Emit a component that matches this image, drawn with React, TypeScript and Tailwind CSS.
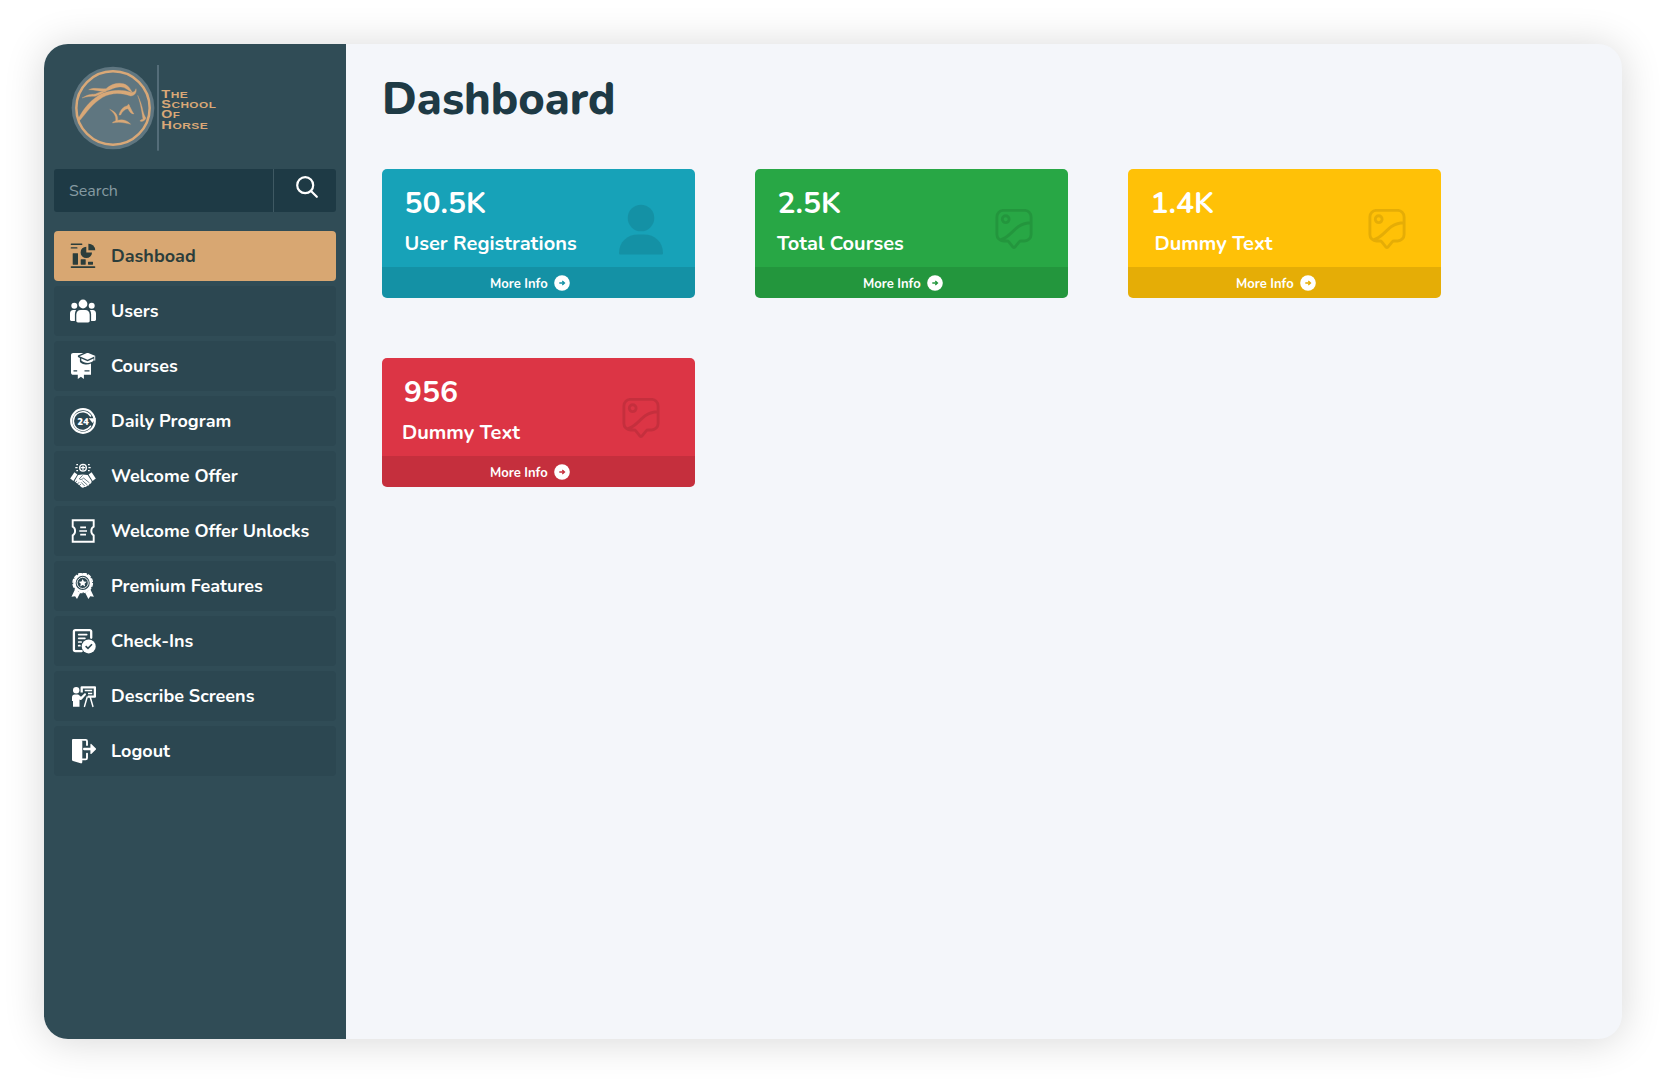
import React, { type ReactNode } from 'react';

const Svg = ({ children }: { children: ReactNode }) => (
  <svg viewBox="0 0 26 26" className="h-[26px] w-[26px] shrink-0" fill="currentColor">
    {children}
  </svg>
);

const DashboardIcon = () => (
  <Svg>
    <rect x="0.7" y="0.6" width="11.7" height="1.3" rx="0.6" />
    <rect x="0.7" y="4.2" width="6.8" height="1.3" rx="0.6" />
    <rect x="2.7" y="10.2" width="5.3" height="11.5" rx="0.4" />
    <rect x="10.7" y="16.3" width="5" height="5.4" rx="0.4" />
    <rect x="18" y="18.7" width="5" height="3" rx="0.4" />
    <rect x="0.7" y="23.2" width="24.6" height="1.8" rx="0.8" />
    <path d="M16.3 3.7a5.7 5.7 0 1 0 5.7 5.7h-5.7z" />
    <path d="M18.4 0.7a6.6 6.6 0 0 1 6.8 6.6h-6.8z" />
  </Svg>
);

const UsersIcon = () => (
  <Svg>
    <circle cx="13" cy="6" r="4.4" />
    <circle cx="4.3" cy="7.7" r="3" />
    <circle cx="21.7" cy="7.7" r="3" />
    <path d="M6.3 16.8c0-3 1.9-4.9 4.4-4.9h4.6c2.5 0 4.4 1.9 4.4 4.9v6c0 1-.6 1.6-1.6 1.6H7.9c-1 0-1.6-.6-1.6-1.6z" />
    <path d="M0 15.5c0-2.1 1.3-3.5 3.2-3.5h2.9c-.8 1.2-1.2 2.6-1.2 4.3V23H1.4C.5 23 0 22.5 0 21.6z" />
    <path d="M26 15.5c0-2.1-1.3-3.5-3.2-3.5h-2.9c.8 1.2 1.2 2.6 1.2 4.3V23h3.5c.9 0 1.4-.5 1.4-1.4z" />
  </Svg>
);

const CoursesIcon = () => (
  <Svg>
    <path d="M3.2 0h10.3L7.9 2.4v1.500l2 1v3.300c0 1.900 3.400 3.200 6.700 3.200 1.500 0 3-.3 4.400-.9v11.200H3.400C1.900 21.700 1 20.800 1 19.400V2.200C1 .9 1.900 0 3.200 0z" />
    <path d="M3.500 17.900h3.700M14.500 17.900h5" stroke="#2c4751" strokeWidth="1.100" />
    <path d="M7.800 17.500h6.100V26L10.900 23.800 7.800 26z" />
    <path d="M17.600-.3l7.900 3.300-7.900 3.700-8.100-3.400z" />
    <path d="M11.300 5.500l6.300 2.700 6-2.700v2c-1.400 1.600-3.500 2.400-6 2.400s-4.700-.8-6.300-2.400z" />
    <path d="M24.300 3.300h.9v4.200h-.9z" />
  </Svg>
);

const DailyIcon = () => (
  <Svg>
    <circle cx="13" cy="13" r="11.800" fill="none" stroke="currentColor" strokeWidth="2.200" />
    <path
      d="M20.600 8A9.400 9.400 0 1 0 20.600 18.200"
      fill="none"
      stroke="currentColor"
      strokeWidth="1.500"
      strokeLinecap="round"
    />
    <path d="M18.800 10.300h7.200l-3.500 4.700z" />
    <text x="7.200" y="16.500" fontSize="9.600" fontWeight="900" textLength="11.600" lengthAdjust="spacingAndGlyphs">
      24
    </text>
  </Svg>
);

const OfferIcon = () => (
  <Svg>
    <circle cx="13" cy="4.700" r="3.300" fill="none" stroke="currentColor" strokeWidth="1.400" />
    <path
      d="M13 2.500v4.400M10.800 4.700h4.400M6.300 1.700h1.700M5.300 4.700h2.300M6.300 7.700h1.700M18 1.700h1.700M18.400 4.700h2.300M18 7.700h1.700"
      fill="none"
      stroke="currentColor"
      strokeWidth="1.200"
    />
    <path d="M4.400 9.300l3 2.300-4 6.300L.2 15.600z" />
    <path d="M21.600 9.300l-3 2.300 4 6.300 3.200-2.300z" />
    <path d="M8 12.100l4.400-.7 5.300.7 3.900 5.900c.2 1.900-1 2.800-2.100 3-.4 1.400-1.400 1.900-2.500 1.800-.5 1.200-1.600 1.500-2.600 1.200-.8 1-2.300 1-3.200.1L4.500 18.300z" />
    <path
      d="M12.600 12.300l-3.300 3.500c1 1.200 2.800.7 4.300-.7l5.800 4.700M12.500 17.700l4.800 4.200M11.100 19.300l3.700 3.800M4.800 20l2.300-2.200M6.700 21.800l2.500-2.600M8.800 23.200l2.100-2.200"
      fill="none"
      stroke="#2c4751"
      strokeWidth="0.700"
    />
  </Svg>
);

const TicketIcon = () => (
  <Svg>
    <path
      d="M2.700 2.300h21v6.400c-1.700.9-2.400 2.500-2.400 4.300s.7 3.400 2.400 4.300v6.400h-21v-6.400c1.700-.9 2.400-2.500 2.400-4.300s-.7-3.400-2.400-4.300z"
      fill="none"
      stroke="currentColor"
      strokeWidth="1.900"
    />
    <path d="M10.200 9.400h5.800M9.300 13h7.700M10.200 16.600h5.800" fill="none" stroke="currentColor" strokeWidth="1.600" />
  </Svg>
);

const MedalIcon = () => (
  <Svg>
    <path d="M5.200 16l4.900 3.900-3.100 6-1.900-2.700-3.600.5zM20.200 16l-4.900 3.900 3.100 6 1.900-2.700 3.600.5z" />
    <circle cx="12.700" cy="9.900" r="9.700" fill="none" stroke="currentColor" strokeWidth="1.400" strokeDasharray="3.900 1.179" />
    <circle cx="12.700" cy="9.900" r="8.300" fill="none" stroke="currentColor" strokeWidth="2.500" />
    <circle cx="12.700" cy="9.900" r="5.600" fill="none" stroke="currentColor" strokeWidth="0.900" />
    <path d="M12.700 5.900l1.200 2.600 2.800.3-2.100 1.900.6 2.800-2.500-1.400-2.500 1.400.6-2.800-2.100-1.900 2.800-.3z" />
  </Svg>
);

const CheckInsIcon = () => (
  <Svg>
    <path
      d="M21.200 9.800V3.600c0-1-.6-1.500-1.500-1.500H5.400c-1 0-1.500.5-1.500 1.500v18c0 1 .5 1.500 1.500 1.500h6.300"
      fill="none"
      stroke="currentColor"
      strokeWidth="2.300"
      strokeLinecap="round"
    />
    <path
      d="M8.700 6.600h8M8.700 10.300h6.200M8.700 14h2.500M8.700 17.700h1.200"
      fill="none"
      stroke="currentColor"
      strokeWidth="1.700"
      strokeLinecap="round"
    />
    <circle cx="18.700" cy="18.400" r="7" />
    <path d="M15.600 18.100l2.400 2.300 4-4.200" fill="none" stroke="#2c4751" strokeWidth="1.600" />
  </Svg>
);

const DescribeIcon = () => (
  <Svg>
    <circle cx="6.200" cy="7.300" r="3.200" />
    <path d="M2 14.300c0-1.800 1.100-2.900 2.700-2.900h3.500l2.800 2.400 3.400-3.300c1.200-.6 2.100.6 1.400 1.600l-4 4.400c-.6.600-1.300.6-1.900.2l-.4-.3v7.300H3v-5.600H2z" />
    <path d="M11.700 9.600V4.300h13.200v9.300h-7" fill="none" stroke="currentColor" strokeWidth="2.300" strokeLinejoin="round" />
    <path d="M14.700 7.500h7.500M18 10.500h4.200" fill="none" stroke="currentColor" strokeWidth="1.400" />
    <path d="M17.200 14l-2.700 9.400M20.200 14l2.700 9.400" fill="none" stroke="currentColor" strokeWidth="1.500" strokeLinecap="round" />
  </Svg>
);

const LogoutIcon = () => (
  <Svg>
    <path d="M2 2.200C2 1.400 2.500.9 3.300.9h1.500l6.300 1c.8.200 1.200.8 1.200 1.600v20.600c0 1-.8 1.500-1.700 1.200L3 22.900c-.7-.3-1-.7-1-1.500z" />
    <path
      d="M4 1.900h11.700c.8 0 1.300.5 1.300 1.300v3.900M17 15.600v4.500c0 .8-.5 1.300-1.300 1.300h-3.500"
      fill="none"
      stroke="currentColor"
      strokeWidth="1.900"
      strokeLinecap="round"
    />
    <path d="M14.200 9.800h6.200V6.400c0-.6.500-.8.900-.4l4.600 4.500c.3.300.3.700 0 1l-4.600 4.400c-.4.400-.9.200-.9-.4v-3.300h-6.200c-1.600 0-1.600-2.400 0-2.400z" />
  </Svg>
);

const Logo = () => (
  <svg viewBox="0 0 510 315" className="h-[105px] w-[170px]">
    <circle cx="159" cy="159" r="124" fill="#5f7680" />
    <circle cx="159" cy="159" r="110" fill="none" stroke="#d9a877" strokeWidth="7.500" />
    <g fill="#d9a877" stroke="#d9a877" strokeWidth="1">
      <path d="M54 193C70 160 96 130 128 115C158 103 192 104 212 112C220 113 226 109 228 101C231 112 224 122 212 123C185 113 155 112 128 127C98 145 80 172 60 196z" />
      <path d="M86 104C104 96 118 103 138 101C158 83 186 80 202 92C211 99 213 107 218 113C206 109 200 99 188 97C170 92 156 104 138 108C118 111 104 103 86 104z" />
      <path d="M66 129C82 119 92 118 106 117C118 112 126 107 140 108C128 112 120 120 106 124C92 124 82 124 66 129z" />
      <path d="M233 121C240 135 246 152 249 168C251 176 254 184 258 189C255 197 249 200 241 199C239 196 243 194 249 193C246 175 243 150 233 121z" />
      <path d="M177 180C181 163 190 155 202 152C205 146 208 147 209 154C213 160 216 170 222 177C213 177 208 169 204 161C194 162 187 169 182 180z" />
      <path d="M149 163C164 169 175 179 173 196C187 192 203 196 212 208C197 205 184 199 157 204C160 199 164 199 167 197C169 184 162 174 149 163z" />
    </g>
    <rect x="291.500" y="30" width="5" height="257" fill="#5c7580" />
    <g fill="#d9a877" fontFamily="'Liberation Sans', Arial, sans-serif" fontWeight="700">
      <text x="304" y="128" fontSize="33" textLength="81" lengthAdjust="spacingAndGlyphs" letterSpacing="1">T<tspan fontSize="27">HE</tspan></text>
      <text x="304" y="159" fontSize="33" textLength="165" lengthAdjust="spacingAndGlyphs" letterSpacing="1">S<tspan fontSize="27">CHOOL</tspan></text>
      <text x="304" y="190" fontSize="33" textLength="57" lengthAdjust="spacingAndGlyphs" letterSpacing="1">O<tspan fontSize="27">F</tspan></text>
      <text x="304" y="221" fontSize="33" textLength="141" lengthAdjust="spacingAndGlyphs" letterSpacing="1">H<tspan fontSize="27">ORSE</tspan></text>
    </g>
  </svg>
);

const UserGlyph = () => (
  <svg viewBox="0 0 44 51" className="mt-[34.500px] mr-8 h-[51px] w-[44px] shrink-0 fill-black/10">
    <circle cx="22" cy="14" r="13.300" />
    <path d="M0 49C0 38 8 30.500 19 30.500h6C36 30.500 44 38 44 49c0 1-.5 1.600-1.500 1.600h-41C.5 50.600 0 50 0 49z" />
  </svg>
);

const PictureGlyph = () => (
  <svg
    viewBox="0 0 37 41"
    className="mt-[39.500px] mr-[35px] h-[41px] w-[38px] shrink-0"
    fill="none"
    stroke="black"
    strokeOpacity="0.1"
    strokeWidth="2.900"
    strokeLinecap="round"
    strokeLinejoin="round"
  >
    <path d="M7.900 1.400h21.200a6.500 6.500 0 0 1 6.500 6.500v17.600a6.500 6.500 0 0 1-6.500 6.500h-3.600c-.8 0-1.300.3-1.800.9l-4.300 5.200c-.6.700-1.300.7-1.900 0l-4.200-5.200c-.5-.6-1-.9-1.800-.9H7.900a6.500 6.500 0 0 1-6.500-6.500V7.900a6.500 6.500 0 0 1 6.500-6.500zM13.600 10.200a3.400 3.400 0 1 1-6.800 0a3.400 3.400 0 1 1 6.800 0M5 31c9-3 12-9.500 18-13.500 4.500-3 7.500-3.800 12.500-3.800" />
  </svg>
);

const navItems: [string, () => React.JSX.Element][] = [
  ['Dashboad', DashboardIcon],
  ['Users', UsersIcon],
  ['Courses', CoursesIcon],
  ['Daily Program', DailyIcon],
  ['Welcome Offer', OfferIcon],
  ['Welcome Offer Unlocks', TicketIcon],
  ['Premium Features', MedalIcon],
  ['Check-Ins', CheckInsIcon],
  ['Describe Screens', DescribeIcon],
  ['Logout', LogoutIcon],
];

const cards = [
  { value: '50.5K', label: 'User Registrations', bg: 'bg-[#17a2b8]', arrow: 'text-[#1591a5]', valuePad: 'pl-[22.500px]', labelPad: 'pl-[22.500px]', Glyph: UserGlyph },
  { value: '2.5K', label: 'Total Courses', bg: 'bg-[#28a745]', arrow: 'text-[#24963e]', valuePad: 'pl-[22.500px]', labelPad: 'pl-[22px]', Glyph: PictureGlyph },
  { value: '1.4K', label: 'Dummy Text', bg: 'bg-[#ffc107]', arrow: 'text-[#e5ad06]', valuePad: 'pl-[22.500px]', labelPad: 'pl-[26.500px]', Glyph: PictureGlyph },
  { value: '956', label: 'Dummy Text', bg: 'bg-[#dc3545]', arrow: 'text-[#c6303e]', valuePad: 'pl-[22px]', labelPad: 'pl-[20px]', Glyph: PictureGlyph },
];

export default function App() {
  return (
    <div className="h-[1083px] w-[1666px] bg-white p-[44px] font-['Nunito','Lato',sans-serif]">
      <div className="flex h-[995px] overflow-hidden rounded-3xl bg-[#f4f6fa] shadow-[0_2px_40px_rgba(0,0,0,0.16)]">
        <aside className="flex w-[302px] shrink-0 flex-col bg-[#304c56] px-2.5">
          <div className="mt-[11px] ml-1.5">
            <Logo />
          </div>
          <div className="mt-[9px] flex h-[43px] shrink-0 overflow-hidden rounded-[3px] bg-[#1e3a45]">
            <div className="flex w-[220px] items-center border-r border-[#3f5963] pl-[15px] text-base text-[#869aa2]">Search</div>
            <div className="flex flex-1 justify-center pt-[7px] pl-1">
              <svg viewBox="0 0 22 22" className="h-[22px] w-[22px]" fill="none" stroke="white" strokeWidth="2.200" strokeLinecap="round">
                <circle cx="9.200" cy="9.200" r="8" />
                <path d="M15 15l5.800 5.800" />
              </svg>
            </div>
          </div>
          <nav className="mt-[19px] flex flex-col gap-[5px]">
            {navItems.map(([label, Icon], i) => (
              <a
                key={label}
                className={
                  i === 0
                    ? 'flex h-[50px] items-center gap-[15px] rounded bg-[#d8a772] pl-4 text-[18px] font-bold text-[#2b3d3b]'
                    : 'flex h-[50px] items-center gap-[15px] rounded bg-[#2c4751] pl-4 text-[18px] font-bold text-white'
                }
              >
                <Icon />
                <span className="whitespace-nowrap">{label}</span>
              </a>
            ))}
          </nav>
        </aside>
        <main className="flex-1 pt-7 pl-9">
          <h1 className="text-[45px] leading-[56px] font-extrabold text-[#1e3a45]">Dashboard</h1>
          <div className="mt-[41px] grid grid-cols-[repeat(3,313px)] gap-[60px]">
            {cards.map(({ value, label, bg, arrow, valuePad, labelPad, Glyph }) => (
              <section key={value} className={`flex h-[129px] flex-col overflow-hidden rounded-[5px] text-white ${bg}`}>
                <div className="flex flex-1 justify-between">
                  <div className="pt-[15px]">
                    <div className={`text-[30px] leading-10 font-bold ${valuePad}`}>{value}</div>
                    <div className={`mt-1.5 text-[20px] leading-7 font-bold whitespace-nowrap ${labelPad}`}>{label}</div>
                  </div>
                  <Glyph />
                </div>
                <div className="flex h-[31px] items-center bg-black/10 pl-[108px] text-[13px] font-bold">
                  <span className="pt-[2px] leading-5">More Info</span>
                  <svg viewBox="0 0 16 16" className={`ml-1.5 h-4 w-4 ${arrow}`}>
                    <circle cx="8" cy="8" r="7.800" fill="white" />
                    <path d="M5.300 8h4.600M8.300 6l2.200 2-2.200 2" fill="none" stroke="currentColor" strokeWidth="1.300" />
                  </svg>
                </div>
              </section>
            ))}
          </div>
        </main>
      </div>
    </div>
  );
}
